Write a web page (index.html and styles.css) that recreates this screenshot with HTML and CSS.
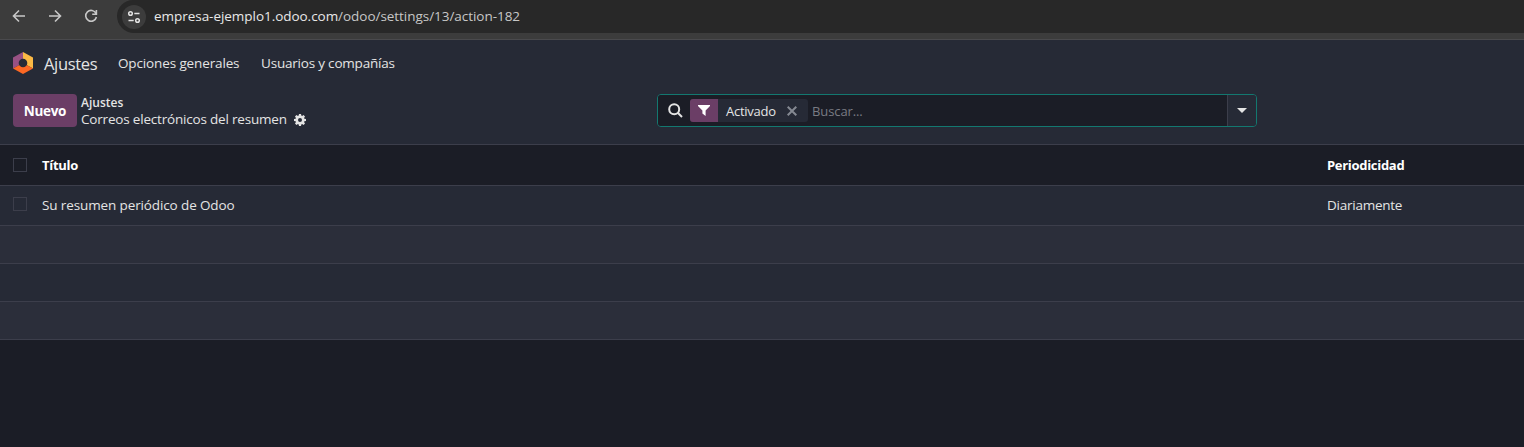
FILE: index.html
```html
<!DOCTYPE html>
<html lang="es">
<head>
<meta charset="utf-8">
<title>Correos electrónicos del resumen</title>
<link rel="stylesheet" href="styles.css">
</head>
<body>
<header class="browser">
  <div class="browser-nav">
    <svg width="14" height="14" viewBox="0 0 14 14" class="nav-icon"><path d="M13 7H1.5M7 1.5 1.5 7 7 12.5"/></svg>
    <svg width="14" height="14" viewBox="0 0 14 14" class="nav-icon"><path d="M1 7h11.500M7 1.500 12.500 7 7 12.500"/></svg>
    <svg width="14" height="14" viewBox="0 0 14 14" class="nav-icon"><path d="M12 4.500A5.400 5.400 0 1 0 12.400 8M12.400 1v4.200H8.200"/></svg>
  </div>
  <div class="address">
    <span class="site-info">
      <svg width="14" height="14" viewBox="0 0 14 14" class="site-icon"><circle cx="3.500" cy="3.500" r="1.800"/><path d="M7.300 3.500H12.500M1.500 10.500H6.700"/><circle cx="10.500" cy="10.500" r="1.800"/></svg>
    </span>
    <span class="url"><span class="url-host">empresa-ejemplo1.odoo.com</span><span class="url-path">/odoo/settings/13/action-182</span></span>
  </div>
</header>
<nav class="navbar">
  <svg class="app-icon" width="20" height="22" viewBox="0 0 20 22">
    <path fill="#985184" d="M10 0 0 5.500v11L10 11z"/>
    <path fill="#fbb945" d="M10 0 20 5.500v11L10 11z"/>
    <path fill="#fc6824" d="M0 16.500 10 11l10 5.500L10 22z"/>
    <circle cx="10" cy="11" r="4.300" fill="#262a36"/>
  </svg>
  <span class="app-name">Ajustes</span>
  <span class="menu menu-general">Opciones generales</span>
  <span class="menu menu-users">Usuarios y compañías</span>
</nav>
<section class="panel">
  <div class="panel-left">
    <button class="btn-new">Nuevo</button>
    <div class="crumbs">
      <div class="crumb-parent">Ajustes</div>
      <div class="crumb-current"><span>Correos electrónicos del resumen</span>
        <svg width="12" height="12" viewBox="0 0 12 12"><path fill="#e4e4e4" fill-rule="evenodd" d="M5 0h2l.3 1.600 .8.350L9.500 1l1.500 1.500-.95 1.400.350.800L12 5v2l-1.600.300-.350.800.950 1.400L9.500 11l-1.400-.950-.800.350L7 12H5l-.300-1.600-.800-.350L2.500 11 1 9.500l.950-1.400-.350-.800L0 7V5l1.600-.300.350-.800L1 2.500 2.500 1l1.400.950.800-.350zM6 4a2 2 0 1 0 0 4 2 2 0 0 0 0-4z"/></svg>
      </div>
    </div>
  </div>
  <div class="search">
    <div class="search-main">
      <svg class="search-icon" width="15" height="15" viewBox="0 0 15 15"><circle cx="6.200" cy="6.200" r="5"/><path d="M10 10 14 14"/></svg>
      <div class="facet">
        <span class="facet-icon"><svg width="12" height="11" viewBox="0 0 12 11"><path fill="#fff" d="M0 0h12v1L7.600 5.400V11L4.400 8.600V5.400L0 1z"/></svg></span>
        <span class="facet-label">Activado</span>
        <svg class="facet-close" width="10" height="10" viewBox="0 0 10 10"><path d="M.700.700l8.600 8.600M9.300.700.700 9.300"/></svg>
      </div>
      <span class="placeholder">Buscar...</span>
    </div>
    <div class="search-toggle"><svg width="10" height="5" viewBox="0 0 10 5"><path fill="#e4e4e4" d="M0 0h10L5 5z"/></svg></div>
  </div>
</section>
<main class="list">
  <div class="row head">
    <span class="check"></span><span class="cell-title">Título</span><span class="cell-period">Periodicidad</span>
  </div>
  <div class="row record">
    <span class="check"></span><span class="cell-title">Su resumen periódico de Odoo</span><span class="cell-period">Diariamente</span>
  </div>
  <div class="row blank light"></div>
  <div class="row blank"></div>
  <div class="row blank light"></div>
</main>
</body>
</html>
```
FILE: styles.css
```css
* { box-sizing: border-box; }
body {
  margin: 0;
  height: 447px;
  overflow: hidden;
  background: #1b1d26;
  color: #e4e4e4;
  font: 13.5px/20px "Open Sans", "Noto Sans", sans-serif;
  white-space: nowrap;
}
svg { display: block; flex: none; }
.browser {
  display: flex;
  height: 40px;
  background: #3c3c3c;
  border-bottom: 1px solid #4a4a4d;
}
.browser-nav { display: flex; gap: 22px; width: 117px; padding: 9px 0 0 12px; }
.nav-icon { fill: none; stroke: #c7c7c7; stroke-width: 1.6; }
.address {
  display: flex;
  align-items: center;
  flex: 1;
  height: 33px;
  padding-left: 5px;
  background: #282828;
  border-radius: 16px 0 0 17px;
}
.site-info {
  display: flex;
  align-items: center;
  justify-content: center;
  width: 24px;
  height: 24px;
  border-radius: 50%;
  background: #3c3c3c;
}
.site-icon { fill: none; stroke: #e3e3e3; stroke-width: 1.5; }
.url { margin-left: 8px; padding-bottom: 2px; color: #c7c7c7; letter-spacing: -0.04px; }
.url-host { color: #e8e8e8; }
.navbar {
  display: flex;
  align-items: center;
  height: 46px;
  padding-left: 13px;
  background: #262a36;
}
.app-name { width: 74px; margin-left: 11px; padding-top: 1px; font-size: 16.5px; letter-spacing: -0.35px; }
.menu-general { width: 143px; letter-spacing: -0.13px; }
.menu-users { letter-spacing: -0.2px; }
.panel {
  display: flex;
  height: 59px;
  padding: 8px 0 0 13px;
  background: #262a36;
  border-bottom: 1px solid #3c3e4b;
}
.panel-left { display: flex; width: 644px; }
.btn-new {
  width: 64px;
  height: 33px;
  padding: 1px 0 0;
  border: 0;
  border-radius: 4px;
  background: #6b3e66;
  color: #fff;
  font: 700 13.5px/32px "Open Sans", sans-serif;
  letter-spacing: -0.3px;
}
.crumbs { padding-left: 4px; line-height: 17px; }
.crumb-parent { font-size: 12px; font-weight: 600; }
.crumb-current { display: flex; align-items: center; gap: 7px; letter-spacing: -0.19px; }
.search {
  display: flex;
  width: 600px;
  height: 33px;
  border: 1px solid #137870;
  border-radius: 4px;
  overflow: hidden;
}
.search-main {
  display: flex;
  align-items: center;
  flex: 1;
  padding-left: 10px;
  background: #1b1d26;
}
.search-icon { fill: none; stroke: #e4e4e4; stroke-width: 2; }
.facet {
  display: flex;
  align-items: center;
  width: 118px;
  height: 23px;
  margin-left: 7px;
  border-radius: 3px;
  overflow: hidden;
  background: #262a36;
}
.facet-icon {
  display: flex;
  align-items: center;
  justify-content: center;
  width: 28px;
  height: 23px;
  background: #6b3e66;
}
.facet-label { width: 69px; padding-left: 8px; font-size: 13px; font-weight: 500; letter-spacing: -0.25px; }
.facet-close { fill: none; stroke: #858992; stroke-width: 2; }
.placeholder { margin-left: 4px; color: #797b83; font-size: 13px; letter-spacing: -0.1px; }
.search-toggle {
  display: flex;
  align-items: center;
  justify-content: center;
  width: 29px;
  background: #262a36;
  border-left: 1px solid #3c3e4b;
}
.row {
  display: flex;
  align-items: center;
  height: 38px;
  padding-left: 13px;
  background: #262a36;
  border-bottom: 1px solid #3c3e4b;
}
.head { height: 41px; background: #1b1d26; color: #fff; font-weight: 700; font-size: 13px; letter-spacing: -0.3px; }
.record { height: 40px; padding-bottom: 2px; letter-spacing: -0.12px; }
.record .cell-period { letter-spacing: -0.25px; }
.light { background: #2b2e3a; }
.check { width: 14px; height: 14px; border: 1px solid #3c3e4b; }
.record .check { margin-top: -1px; }
.cell-title { width: 1285px; padding-left: 15px; }
.cell-period { padding-left: 15px; }
```
